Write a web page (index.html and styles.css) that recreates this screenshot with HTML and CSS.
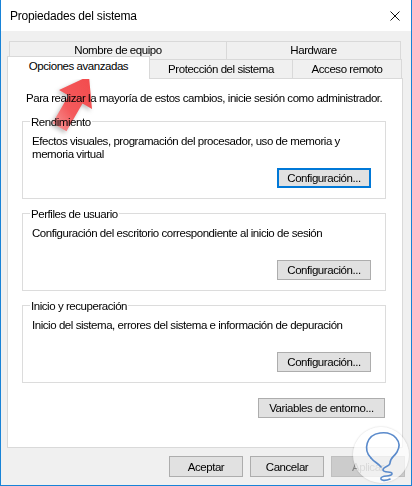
FILE: index.html
```html
<!DOCTYPE html>
<html lang="es">
<head>
<meta charset="UTF-8" />
<title>Propiedades del sistema</title>
<link rel="stylesheet" href="styles.css">
</head>
<body>
    <div class="window">
        <div class="titlebar">
            <span class="title">Propiedades del sistema</span>
            <svg class="close" width="10" height="10" viewBox="0 0 10 10">
                <path d="M0.5 0.5 L9.5 9.5 M9.5 0.5 L0.5 9.5" stroke="#111" stroke-width="1" fill="none" />
            </svg>
        </div>

        <div class="content">
            <div class="tabs">
                <div class="tab-row back">
                    <div class="tab tab-name">Nombre de equipo</div>
                    <div class="tab tab-hw">Hardware</div>
                </div>
                <div class="tab-row front">
                    <div class="tab tab-adv active">Opciones avanzadas</div>
                    <div class="tab tab-prot">Protección del sistema</div>
                    <div class="tab tab-remote">Acceso remoto</div>
                </div>
            </div>

            <div class="panel">
                <p class="intro">Para realizar la mayoría de estos cambios, inicie sesión como administrador.</p>

                <div class="group">
                    <span class="group-title">Rendimiento</span>
                    <p class="group-text">Efectos visuales, programación del procesador, uso de memoria y memoria virtual</p>
                    <div class="group-actions">
                        <button class="btn config focused">Configuración...</button>
                    </div>
                </div>

                <div class="group">
                    <span class="group-title">Perfiles de usuario</span>
                    <p class="group-text">Configuración del escritorio correspondiente al inicio de sesión</p>
                    <div class="group-actions">
                        <button class="btn config">Configuración...</button>
                    </div>
                </div>

                <div class="group">
                    <span class="group-title">Inicio y recuperación</span>
                    <p class="group-text">Inicio del sistema, errores del sistema e información de depuración</p>
                    <div class="group-actions">
                        <button class="btn config">Configuración...</button>
                    </div>
                </div>

                <div class="env-row">
                    <button class="btn env">Variables de entorno...</button>
                </div>
            </div>

            <div class="footer">
                <button class="btn dlg">Aceptar</button>
                <button class="btn dlg">Cancelar</button>
                <button class="btn dlg disabled">Aplicar</button>
            </div>
        </div>

        <!-- red pointer arrow drawn over the screenshot -->
        <svg class="arrow" width="62" height="74" viewBox="0 0 62 74">
            <defs>
                <linearGradient id="arrowFill" x1="1" y1="0" x2="0" y2="1">
                    <stop offset="0" stop-color="#f24a4c" />
                    <stop offset="0.6" stop-color="#f45a5c" />
                    <stop offset="1" stop-color="#f7a0a1" />
                </linearGradient>
            </defs>
            <polygon points="49,11 52,44 42.5,38.5 26.5,66.3 12.5,58.3 28.5,30.5 19,25" fill="url(#arrowFill)" />
        </svg>

        <!-- site watermark -->
        <div class="watermark">
            <svg width="56" height="56" viewBox="0 0 56 56">
                <path d="M18 31 C10 23, 13 8, 27 6 C41 4, 50 15, 44 25 C41 30, 37 31, 37 36 C37 40, 30 39, 30 43 C30 46, 40 44, 39 47 C38 50, 29 48, 28 51 C27 54, 33 54, 37 52" stroke="#5a8acb" stroke-width="1.6" fill="none" stroke-linecap="round" />
                <path d="M18 31 C21 35, 25 36, 28 40" stroke="#5a8acb" stroke-width="1.6" fill="none" stroke-linecap="round" />
            </svg>
        </div>
    </div>
</body>
</html>
```

FILE: styles.css
```css
/* Reset */
* {
    margin: 0;
    padding: 0;
    box-sizing: border-box;
}

body {
    font-family: 'Liberation Sans', Arial, sans-serif;
    font-size: 11.5px;
    letter-spacing: -0.45px;
    color: #000;
    background: #f0f0f0;
}

/* Window frame */
.window {
    position: relative;
    width: 412px;
    height: 486px;
    background-color: #f0f0f0;
    border-left: 1px solid #1883d7;
    border-right: 1px solid #1883d7;
    border-bottom: 1px solid #1883d7;
    overflow: hidden;
}

.titlebar {
    height: 31px;
    background-color: #fff;
    display: flex;
    align-items: center;
    justify-content: space-between;
    padding: 1px 11px 0 9px;
}

.title {
    font-size: 12px;
    letter-spacing: -0.2px;
}

.close {
    display: block;
}

/* Main content */
.content {
    padding: 10px 0 0 6px;
}

/* Tabs */
.tab-row {
    display: flex;
}

.tab-row.back {
    height: 18px;
    margin-left: 2px;
}

.tab-row.front {
    height: 19px;
    align-items: flex-end;
}

.tab {
    border: 1px solid #d9d9d9;
    border-bottom: none;
    background-color: #f0f0f0;
    text-align: center;
    line-height: 13px;
}

.tab + .tab {
    margin-left: -1px;
}

.back .tab {
    height: 18px;
    padding-top: 2px;
}

.front .tab {
    height: 19px;
    padding-top: 3px;
}

.tab-name { width: 218px; }
.tab-hw { width: 175px; }
.tab-adv { width: 143px; }
.tab-prot { width: 144px; }
.tab-remote { width: 110px; }

.front .tab.active {
    position: relative;
    z-index: 1;
    height: 23px;
    margin-bottom: -1px;
    padding-top: 3px;
    background-color: #fff;
}

/* Tab page */
.panel {
    width: 396px;
    height: 370px;
    background-color: #fff;
    border: 1px solid #d9d9d9;
    padding: 13px 16px 0 14px;
}

.intro {
    line-height: 13px;
    margin-left: 4px;
    white-space: nowrap;
}

/* Group boxes */
.group {
    border: 1px solid #dcdcdc;
    margin-top: 14px;
    padding: 0 13px 10px 9px;
    display: flex;
    flex-direction: column;
}

.panel .intro + .group {
    margin-top: 16px;
}

.group-title {
    align-self: flex-start;
    margin: -6px 0 0 -2px;
    padding: 0 1px;
    background-color: #fff;
    line-height: 13px;
}

.group-text {
    margin-top: 6px;
    min-height: 26px;
    line-height: 13px;
    padding-right: 10px;
}

.group-actions {
    display: flex;
    justify-content: flex-end;
    margin-top: 7px;
}

/* Buttons */
.btn {
    font-family: inherit;
    font-size: 11.5px;
    letter-spacing: -0.45px;
    color: #000;
    background-color: #e1e1e1;
    border: 1px solid #adadad;
    height: 20px;
    line-height: 16px;
    padding: 0;
    text-align: center;
}

.btn.config {
    width: 94px;
    margin-right: 1px;
}

.btn.focused {
    border: 2px solid #0078d7;
}

.env-row {
    display: flex;
    justify-content: flex-end;
    margin-top: 15px;
}

.btn.env {
    width: 127px;
    margin-right: 1px;
}

.footer {
    display: flex;
    justify-content: flex-end;
    gap: 7px;
    padding-right: 6px;
    margin-top: 8px;
}

.btn.dlg {
    width: 74px;
    height: 21px;
}

.btn.disabled {
    background-color: #cccccc;
    border-color: #bfbfbf;
    color: #838383;
}

/* Overlays */
.arrow {
    position: absolute;
    left: 39px;
    top: 65px;
    mix-blend-mode: multiply;
    filter: drop-shadow(-2px 2px 2px rgba(0, 0, 0, 0.25));
}

.watermark {
    position: absolute;
    left: 352px;
    top: 427px;
    width: 56px;
    height: 56px;
    border-radius: 50%;
    background-color: rgba(255, 255, 255, 0.7);
    box-shadow: 0 0 2px rgba(0, 0, 0, 0.2);
}

.watermark svg {
    display: block;
}
```
